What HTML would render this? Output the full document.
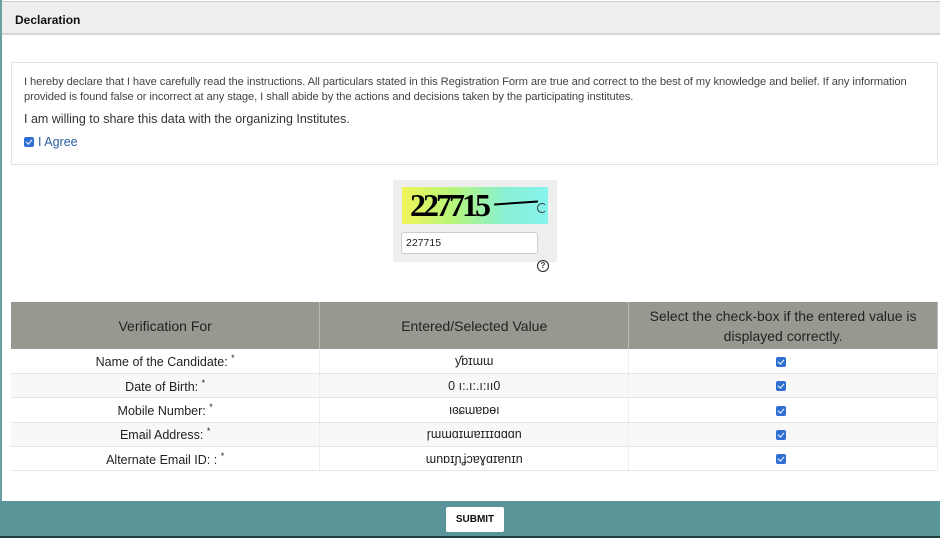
<!DOCTYPE html>
<html><head><style>
*{box-sizing:border-box;margin:0;padding:0}
body{width:940px;height:538px;overflow:hidden;background:#fff;font-family:"Liberation Sans",sans-serif;position:relative;color:#333}
.lb{position:absolute;left:0;top:0;width:2px;height:538px;background:#6a9fa3}
.hdr{position:absolute;left:2px;top:1px;width:938px;height:34px;background:#eee;border-top:1px solid #ccc;border-bottom:2px solid #d6d6d6;font-weight:bold;font-size:12px;color:#111;padding:11px 0 0 13px}
.dec{position:absolute;left:11px;top:62px;width:927px;height:103px;border:1px solid #e3e3e3;padding:12px 20px 0 12px}
.dec .p{font-size:11.2px;line-height:15px;color:#444;letter-spacing:-0.1px}
.dec .w{font-size:12.5px;margin-top:7px;color:#333}
.dec .a{font-size:12.5px;margin-top:9px;color:#2a5d9f;display:flex;align-items:center}
.cb{display:inline-block;width:10px;height:10px;background:#2f6fd1;border-radius:2px;position:relative;margin-right:4px;vertical-align:middle}
.cb:after{content:"";position:absolute;left:3px;top:1px;width:2.5px;height:5px;border:solid #fff;border-width:0 1.3px 1.3px 0;transform:rotate(40deg)}
.cap{position:absolute;left:393px;top:180px;width:164px;height:82px;background:#eee;border-radius:2px}
.img{position:absolute;left:9px;top:7px;width:146px;height:37px;background:linear-gradient(90deg,#f2f45a 0%,#b6f57a 35%,#8af0d2 70%,#86f3ee 100%)}
.img span{position:absolute;left:8px;top:0px;font:bold 32px "Liberation Serif",serif;letter-spacing:-3px;color:#000}
.img i{position:absolute;left:92px;top:15px;width:44px;height:2px;background:#000;transform:rotate(-4deg)}
.img b{position:absolute;left:135px;top:16px;width:10px;height:10px;border:1.5px solid #333;border-radius:50%;border-right-color:transparent}
.inp{position:absolute;left:8px;top:52px;width:137px;height:22px;background:#fff;border:1px solid #ccc;border-radius:3px;font-size:10.5px;padding:4px 0 0 4px;color:#222}
.q{position:absolute;left:537px;top:260px;width:12px;height:12px;border:1.3px solid #222;border-radius:50%;font-size:8px;font-weight:bold;text-align:center;line-height:10px}
table{position:absolute;left:11px;top:302px;width:927px;border-collapse:collapse;font-size:12.5px;color:#222}
th{background:#959990;font-weight:normal;height:47px;font-size:14px;color:#222;border-right:1px solid #b8bbb5;line-height:20px}
td{height:24.4px;text-align:center;border-right:1px solid #eee;border-bottom:1px solid #e6e6e6}
tr:nth-child(odd) td{background:#f8f8f8}
col{width:309px}
sup{font-size:9px}
.ft{position:absolute;left:0;top:501px;width:940px;height:37px;background:#5a9599;border-bottom:2px solid #1f3c3e}
.btn{position:absolute;left:446px;top:6px;width:58px;height:25px;background:#fff;border-radius:2px;font-size:10px;font-weight:bold;text-align:center;line-height:25px;color:#111}
</style></head><body>
<div class="lb"></div>
<div class="hdr">Declaration</div>
<div class="dec">
<div class="p">I hereby declare that I have carefully read the instructions. All particulars stated in this Registration Form are true and correct to the best of my knowledge and belief. If any information provided is found false or incorrect at any stage, I shall abide by the actions and decisions taken by the participating institutes.</div>
<div class="w">I am willing to share this data with the organizing Institutes.</div>
<div class="a"><span class="cb"></span>I Agree</div>
</div>
<div class="cap"><div class="img"><span>227715</span><i></i><b></b></div><div class="inp">227715</div></div>
<div class="q">?</div>
<table><colgroup><col><col><col></colgroup>
<tr><th>Verification For</th><th>Entered/Selected Value</th><th>Select the check-box if the entered value is displayed correctly.</th></tr>
<tr><td>Name of the Candidate: <sup>*</sup></td><td>ƴɒɪɯɯ</td><td><span class="cb"></span></td></tr>
<tr><td>Date of Birth: <sup>*</sup></td><td>0 ı:.ı:.ı:ıı0</td><td><span class="cb"></span></td></tr>
<tr><td>Mobile Number: <sup>*</sup></td><td>ıɞɕɯɐɒɵı</td><td><span class="cb"></span></td></tr>
<tr><td>Email Address: <sup>*</sup></td><td>ɼɯɯɑɪɯɐɪɪɪɑɑɑn</td><td><span class="cb"></span></td></tr>
<tr><td>Alternate Email ID: : <sup>*</sup></td><td>ɯnɒɪɲʝɔɐɣɑɪɐnɪn</td><td><span class="cb"></span></td></tr>
</table>
<div class="ft"><div class="btn">SUBMIT</div></div>
</body></html>
